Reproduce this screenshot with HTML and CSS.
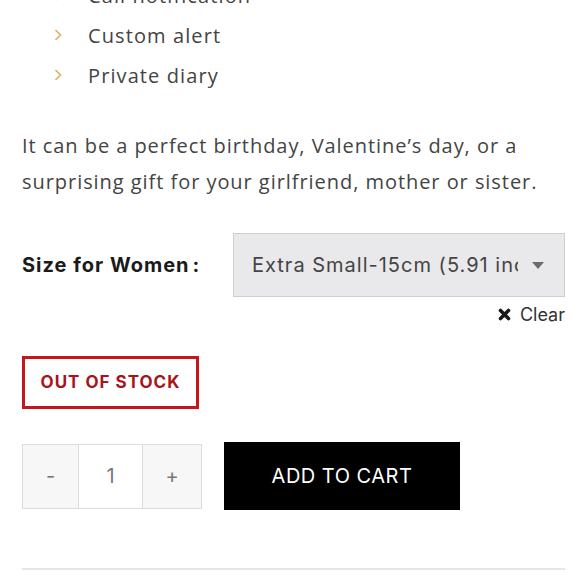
FILE: index.html
```html
<!DOCTYPE html>
<html lang="en">
<head>
<meta charset="utf-8">
<title>Product</title>
<link rel="stylesheet" href="styles.css">
</head>
<body>
<div class="page">
  <ul class="features">
    <li><svg class="chev" viewBox="0 0 8 12" width="8" height="12"><polyline points="1.5,1 6.5,6 1.5,11"/></svg><span>Call notification</span></li>
    <li><svg class="chev" viewBox="0 0 8 12" width="8" height="12"><polyline points="1.5,1 6.5,6 1.5,11"/></svg><span>Custom alert</span></li>
    <li><svg class="chev" viewBox="0 0 8 12" width="8" height="12"><polyline points="1.5,1 6.5,6 1.5,11"/></svg><span>Private diary</span></li>
  </ul>
  <p class="desc">It can be a perfect birthday, Valentine’s day, or a surprising gift for your girlfriend, mother or sister.</p>
  <div class="variation">
    <label class="var-label">Size for Women<span class="colon">:</span></label>
    <div class="select">
      <span class="select-text">Extra Small-15cm (5.91 inches)</span>
      <svg class="caret" viewBox="0 0 12 7" width="12" height="7"><polygon points="0,0 12,0 6,7"/></svg>
    </div>
  </div>
  <div class="clear-row">
    <a class="clear"><svg viewBox="0 0 13 13" width="13" height="13"><path d="M2.5 2.5 L10.5 10.5 M10.5 2.5 L2.5 10.5"/></svg>Clear</a>
  </div>
  <div class="stock">OUT OF STOCK</div>
  <div class="cart-row">
    <div class="qty">
      <span class="qty-btn">-</span>
      <span class="qty-val">1</span>
      <span class="qty-btn plus">+</span>
    </div>
    <button class="add">ADD TO CART</button>
  </div>
  <hr class="rule">
</div>
</body>
</html>
```

FILE: styles.css
```css
html, body {
  margin: 0;
  padding: 0;
  background: #fff;
}
.page {
  padding: 0 15px 0 22px;
  font-family: "Open Sans", "Liberation Sans", sans-serif;
  color: #444;
}
.features {
  list-style: none;
  margin: -25px 0 0 0;
  padding: 0 0 0 32px;
}
.features li {
  display: flex;
  align-items: center;
  height: 40px;
  font-size: 20px;
  letter-spacing: 1.1px;
}
.chev {
  fill: none;
  stroke: #dcae6a;
  stroke-width: 1.6;
  margin-right: 26px;
}
.desc {
  margin: 33px 0 0 0;
  font-size: 20px;
  line-height: 36px;
  letter-spacing: 0.95px;
}
.variation {
  display: flex;
  align-items: center;
  margin-top: 33px;
}
.var-label {
  width: 211px;
  font-family: "Inter", "Liberation Sans", sans-serif;
  font-weight: 700;
  font-size: 20px;
  color: #1a1a1a;
  letter-spacing: 1px;
}
.colon {
  margin-left: 3px;
}
.select {
  flex: 1;
  height: 64px;
  box-sizing: border-box;
  border: 1px solid #cfcfd1;
  background: #e9e9eb;
  display: flex;
  align-items: center;
  padding: 0 20px 0 18px;
  overflow: hidden;
}
.select-text {
  flex: 1;
  font-family: "Inter", "Liberation Sans", sans-serif;
  font-size: 20px;
  letter-spacing: 1px;
  color: #444;
  white-space: nowrap;
  overflow: hidden;
}
.caret {
  fill: #6b6b6b;
  margin-left: 14px;
  flex: none;
}
.clear-row {
  display: flex;
  justify-content: flex-end;
  margin-top: 7px;
}
.clear {
  display: flex;
  align-items: center;
  font-family: "Inter", "Liberation Sans", sans-serif;
  font-size: 18px;
  color: #333;
}
.clear svg {
  stroke: #1a1a1a;
  stroke-width: 3.6;
  stroke-linecap: round;
  margin-right: 9px;
}
.stock {
  display: inline-block;
  margin-top: 31px;
  border: 3px solid #c4161c;
  width: 177px;
  height: 53px;
  box-sizing: border-box;
  text-align: center;
  line-height: 47px;
  font-family: "Inter", "Liberation Sans", sans-serif;
  font-weight: 700;
  font-size: 17px;
  letter-spacing: 1px;
  color: #a8141b;
}
.cart-row {
  display: flex;
  align-items: center;
  gap: 22px;
  margin-top: 33px;
}
.qty {
  display: flex;
  border: 1px solid #dcdcdc;
  height: 65px;
  box-sizing: border-box;
}
.qty-btn, .qty-val {
  display: flex;
  align-items: center;
  justify-content: center;
  font-family: "Inter", "Liberation Sans", sans-serif;
  font-size: 20px;
  color: #777;
}
.qty-btn {
  width: 55px;
  background: #f7f7f7;
}
.qty-btn.plus {
  width: 58px;
}
.qty-val {
  width: 63px;
  background: #fff;
  border-left: 1px solid #dcdcdc;
  border-right: 1px solid #dcdcdc;
}
.add {
  width: 236px;
  height: 68px;
  background: #000;
  color: #fff;
  border: none;
  font-family: "Inter", "Liberation Sans", sans-serif;
  font-size: 20px;
  letter-spacing: 0.5px;
  padding: 0;
}
.rule {
  margin: 58px 0 0 0;
  border: none;
  height: 2px;
  background: #e6e6e6;
}
```
